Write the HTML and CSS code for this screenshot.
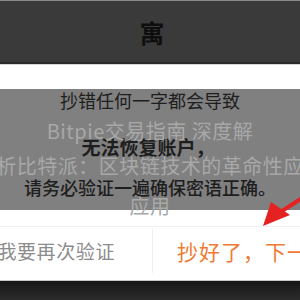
FILE: index.html
```html
<!DOCTYPE html>
<html lang="zh-CN">
<head>
<meta charset="utf-8">
<link rel="stylesheet" href="styles.css">
</head>
<body>
<div class="page">
  <header class="topbar"><span class="logo">寓</span></header>
  <div class="gap"></div>
  <section class="panel">
    <p class="line-a">抄错任何一字都会导致</p>
    <p class="line-b">无法恢复账户，</p>
    <p class="line-c">请务必验证一遍确保密语正确。</p>
  </section>
  <section class="dialog-foot">
    <div class="actions">
      <div class="btn btn-left">我要再次验证</div>
      <div class="btn btn-right">抄好了，下一步</div>
    </div>
  </section>
  <footer class="bottombar"></footer>

  <h1 class="title">
    <span class="t1">Bitpie交易指南 深度解</span>
    <span class="t2">析比特派：区块链技术的革命性应</span>
    <span class="t3">应用</span>
  </h1>

  <svg class="arrow" width="60" height="60" viewBox="0 0 60 60">
    <line x1="62" y1="2" x2="22" y2="28" stroke="#e52222" stroke-width="4"/>
    <polygon points="3,43 11,19 30,32" fill="#e52222"/>
  </svg>
</div>
</body>
</html>
```

FILE: styles.css
```css
* { box-sizing: border-box; margin: 0; padding: 0; }
html, body { width: 300px; height: 300px; overflow: hidden; background: #fff; }
body { font-family: "Noto Sans CJK SC", "Noto Sans", sans-serif; }

.page {
  position: relative;
  width: 300px;
  height: 300px;
  display: flex;
  flex-direction: column;
  overflow: hidden;
}

.topbar {
  height: 65px;
  flex: none;
  background: #3a3a3a;
  border-top: 1px solid #8a8a8a;
  border-bottom: 1px solid #d8d8d8;
  box-shadow: inset 0 -2px 0 #2a2a2a;
  display: flex;
  align-items: center;
  justify-content: center;
  padding-bottom: 2px;
}
.logo {
  font-size: 25px;
  line-height: 28px;
  font-weight: 700;
  color: #0e0e0e;
  margin-left: 4px;
}

.gap { height: 24px; flex: none; background: #fff; }

.panel {
  height: 121px;
  flex: none;
  background: #808080;
  display: flex;
  flex-direction: column;
  align-items: center;
  color: #1e1e1e;
}
.line-a { font-size: 18px; line-height: 22px; white-space: nowrap; }
.line-b { font-size: 19px; line-height: 28px; font-weight: 700; margin-top: 22px; margin-left: -4px; white-space: nowrap; }
.line-c { font-size: 18px; line-height: 24px; font-weight: 500; margin-top: 14px; white-space: nowrap; }

.dialog-foot {
  height: 70px;
  flex: none;
  background: #fff;
  padding-top: 16px;
}
.actions {
  height: 54px;
  border-top: 1px solid #f0f0f0;
  display: flex;
  padding: 2px 0 7px;
}
.btn {
  line-height: 44px;
  white-space: nowrap;
  display: flex;
  align-items: center;
}
.btn-left {
  width: 153px;
  flex: none;
  justify-content: flex-end;
  padding-right: 37px;
  color: #8c8c8c;
  font-size: 19px;
  letter-spacing: 0.6px;
  border-right: 1px solid #f0f0f0;
}
.btn-right {
  flex: none;
  padding-left: 24px;
  color: #f07a32;
  font-size: 21px;
  letter-spacing: 1px;
}

.bottombar {
  flex: 1;
  border-top: 1px solid #c8c8c8;
  background: linear-gradient(#161616, #2c2c2c);
}

.title {
  position: absolute;
  top: 116px;
  left: 0;
  width: 300px;
  display: flex;
  flex-direction: column;
  align-items: center;
  font-size: 20px;
  font-weight: 400;
  letter-spacing: 0.5px;
  color: #a8a8a8;
  pointer-events: none;
}
.title span { display: block; white-space: nowrap; line-height: 30px; }
.t2 { margin-top: 5px; }
.t3 { margin-top: 10px; }

.arrow {
  position: absolute;
  left: 260px;
  top: 183px;
}
```
